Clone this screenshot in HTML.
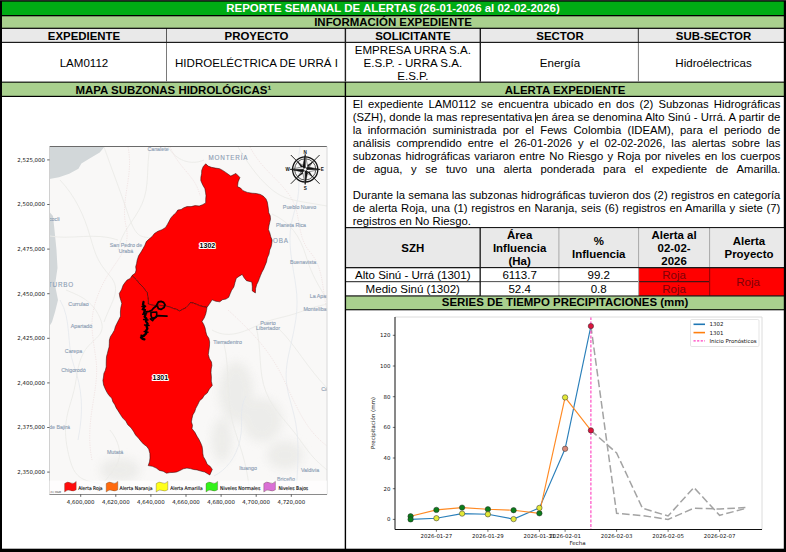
<!DOCTYPE html>
<html><head><meta charset="utf-8">
<style>
html,body{margin:0;padding:0;}
body{width:786px;height:552px;position:relative;overflow:hidden;background:#fff;font-family:"Liberation Sans",Arial,sans-serif;color:#000;}
.a{position:absolute;box-sizing:border-box;}
.c{display:flex;align-items:center;justify-content:center;text-align:center;padding-top:1.6px;}
.h{font-weight:bold;font-size:11.45px;line-height:13px;white-space:nowrap;}
.t{font-size:11.55px;line-height:13px;}
.pl{display:block;text-align:justify;text-align-last:justify;white-space:nowrap;height:13px;}
.pl.e{text-align-last:left;}
svg text{font-family:"DejaVu Sans","Liberation Sans",sans-serif;}
svg .ls text{font-family:"Liberation Sans","DejaVu Sans",sans-serif;}
</style></head><body>
<svg class="a" style="left:0;top:0" width="786" height="552" viewBox="0 0 786 552" shape-rendering="auto">
<rect width="786" height="552" fill="#000"/>
<rect x="0" y="0" width="786" height="0.6" fill="#444"/>
<rect x="2.00" y="1.60" width="781.80" height="13.40" fill="#00ac14"/>
<rect x="2.00" y="16.30" width="781.80" height="11.40" fill="#a9d08e"/>
<rect x="2.00" y="28.90" width="781.80" height="14.10" fill="#1c1c1c"/>
<rect x="2.00" y="28.90" width="164.00" height="12.90" fill="#e9e9e9"/>
<rect x="167.00" y="28.90" width="177.70" height="12.90" fill="#e9e9e9"/>
<rect x="346.10" y="28.90" width="133.50" height="12.90" fill="#e9e9e9"/>
<rect x="481.00" y="28.90" width="156.90" height="12.90" fill="#e9e9e9"/>
<rect x="638.90" y="28.90" width="144.90" height="12.90" fill="#e9e9e9"/>
<rect x="166.00" y="28.90" width="1.00" height="12.90" fill="#5a5a5a"/>
<rect x="637.90" y="28.90" width="1.00" height="12.90" fill="#5a5a5a"/>
<rect x="2.00" y="43.00" width="781.80" height="38.60" fill="#fff"/>
<rect x="166.00" y="43.00" width="1.00" height="38.60" fill="#7a7a7a"/>
<rect x="637.90" y="43.00" width="1.00" height="38.60" fill="#7a7a7a"/>
<rect x="344.70" y="43.00" width="1.40" height="38.60" fill="#222"/>
<rect x="479.60" y="43.00" width="1.40" height="38.60" fill="#222"/>
<rect x="2.00" y="82.70" width="342.70" height="13.10" fill="#a9d08e"/>
<rect x="346.10" y="82.70" width="437.70" height="13.10" fill="#a9d08e"/>
<rect x="2.00" y="97.00" width="342.70" height="451.70" fill="#fff"/>
<rect x="346.10" y="97.00" width="437.70" height="130.10" fill="#fff"/>
<rect x="346.10" y="227.10" width="437.70" height="69.40" fill="#1a1a1a"/>
<rect x="346.10" y="228.20" width="133.40" height="38.80" fill="#e9e9e9"/>
<rect x="480.90" y="228.20" width="302.90" height="38.80" fill="#a8a8a8"/>
<rect x="480.90" y="228.20" width="77.50" height="38.80" fill="#e9e9e9"/>
<rect x="559.40" y="228.20" width="78.70" height="38.80" fill="#e9e9e9"/>
<rect x="639.10" y="228.20" width="70.00" height="38.80" fill="#e9e9e9"/>
<rect x="710.10" y="228.20" width="73.70" height="38.80" fill="#e9e9e9"/>
<rect x="346.10" y="268.30" width="133.40" height="12.90" fill="#fff"/>
<rect x="480.90" y="268.30" width="157.20" height="12.90" fill="#b4b4b4"/>
<rect x="480.90" y="268.30" width="77.50" height="12.90" fill="#fff"/>
<rect x="559.40" y="268.30" width="78.70" height="12.90" fill="#fff"/>
<rect x="638.10" y="268.30" width="71.00" height="12.90" fill="#ff0000"/>
<rect x="346.10" y="282.20" width="133.40" height="13.10" fill="#fff"/>
<rect x="480.90" y="282.20" width="157.20" height="13.10" fill="#b4b4b4"/>
<rect x="480.90" y="282.20" width="77.50" height="13.10" fill="#fff"/>
<rect x="559.40" y="282.20" width="78.70" height="13.10" fill="#fff"/>
<rect x="638.10" y="282.20" width="71.00" height="13.10" fill="#ff0000"/>
<rect x="638.10" y="268.30" width="1.00" height="27.00" fill="#b4b4b4"/>
<rect x="709.10" y="268.30" width="1.00" height="27.00" fill="#b00000"/>
<rect x="710.10" y="268.30" width="73.70" height="27.00" fill="#ff0000"/>
<rect x="346.10" y="296.50" width="437.70" height="12.70" fill="#a9d08e"/>
<rect x="346.10" y="310.30" width="437.70" height="238.40" fill="#fff"/>
</svg>
<div class="a c h" style="left:2.0px;top:1.6px;width:782.0px;height:13.4px;color:#fff;padding-top:0">REPORTE SEMANAL DE ALERTAS (26-01-2026 al 02-02-2026)</div>
<div class="a c h" style="left:2.0px;top:16.3px;width:782.0px;height:11.4px;">INFORMACIÓN EXPEDIENTE</div>
<div class="a c h" style="left:2.0px;top:28.9px;width:164.0px;height:12.9px;">EXPEDIENTE</div>
<div class="a c h" style="left:167.5px;top:28.9px;width:178.0px;height:12.9px;">PROYECTO</div>
<div class="a c h" style="left:346.1px;top:28.9px;width:133.5px;height:12.9px;">SOLICITANTE</div>
<div class="a c h" style="left:481.5px;top:28.9px;width:157.0px;height:12.9px;">SECTOR</div>
<div class="a c h" style="left:642.5px;top:28.9px;width:142.0px;height:12.9px;">SUB-SECTOR</div>
<div class="a c t" style="left:2.0px;top:43.0px;width:164.0px;height:38.6px;">LAM0112</div>
<div class="a c t" style="left:167.5px;top:43.0px;width:178.0px;height:38.6px;">HIDROELÉCTRICA DE URRÁ I</div>
<div class="a c t" style="left:346.1px;top:43.0px;width:133.5px;height:38.6px;">EMPRESA URRA S.A.<br>E.S.P. - URRA S.A.<br>E.S.P.</div>
<div class="a c t" style="left:481.5px;top:43.0px;width:157.0px;height:38.6px;">Energía</div>
<div class="a c t" style="left:642.5px;top:43.0px;width:142.0px;height:38.6px;">Hidroélectricas</div>
<div class="a c h" style="left:2.0px;top:82.7px;width:342.7px;height:13.1px;">MAPA SUBZONAS HIDROLÓGICAS¹</div>
<div class="a c h" style="left:346.1px;top:82.7px;width:437.9px;height:13.1px;">ALERTA EXPEDIENTE</div>
<div class="a t" id="para" style="left:352.8px;top:98px;width:427.6px;font-size:11.3px">
<span class="pl">El expediente LAM0112 se encuentra ubicado en dos (2) Subzonas Hidrográficas</span>
<span class="pl">(SZH), donde la mas representativa en área se denomina Alto Sinú - Urrá. A partir de</span>
<span class="pl">la información suministrada por el Fews Colombia (IDEAM), para el periodo de</span>
<span class="pl">análisis comprendido entre el 26-01-2026 y el 02-02-2026, las alertas sobre las</span>
<span class="pl">subzonas hidrográficas variaron entre No Riesgo y Roja por niveles en los cuerpos</span>
<span class="pl">de agua, y se tuvo una alerta ponderada para el expediente de Amarilla.</span>
<span class="pl">&nbsp;</span>
<span class="pl">Durante la semana las subzonas hidrográficas tuvieron dos (2) registros en categoría</span>
<span class="pl">de alerta Roja, una (1) registros en Naranja, seis (6) registros en Amarilla y siete (7)</span>
<span class="pl e">registros en No Riesgo.</span>
</div>
<div class="a" style="left:535.4px;top:113px;width:1px;height:9.5px;background:#222"></div>
<div class="a c h" style="left:346.1px;top:228.2px;width:133.4px;height:38.8px;white-space:normal">SZH</div>
<div class="a c h" style="left:480.9px;top:228.2px;width:77.5px;height:38.8px;white-space:normal">Área<br>Influencia<br>(Ha)</div>
<div class="a c h" style="left:559.4px;top:228.2px;width:78.7px;height:38.8px;white-space:normal">%<br>Influencia</div>
<div class="a c h" style="left:639.1px;top:228.2px;width:70.0px;height:38.8px;white-space:normal">Alerta al<br>02-02-<br>2026</div>
<div class="a c h" style="left:713.5px;top:228.2px;width:71.0px;height:38.8px;white-space:normal">Alerta<br>Proyecto</div>
<div class="a c t" style="left:346.1px;top:268.3px;width:133.4px;height:12.9px;">Alto Sinú - Urrá (1301)</div>
<div class="a c t" style="left:480.9px;top:268.3px;width:77.5px;height:12.9px;">6113.7</div>
<div class="a c t" style="left:559.4px;top:268.3px;width:78.7px;height:12.9px;">99.2</div>
<div class="a c t" style="left:639.1px;top:268.3px;width:70.0px;height:12.9px;color:#800008">Roja</div>
<div class="a c t" style="left:346.1px;top:282.2px;width:133.4px;height:13.1px;">Medio Sinú (1302)</div>
<div class="a c t" style="left:480.9px;top:282.2px;width:77.5px;height:13.1px;">52.4</div>
<div class="a c t" style="left:559.4px;top:282.2px;width:78.7px;height:13.1px;">0.8</div>
<div class="a c t" style="left:639.1px;top:282.2px;width:70.0px;height:13.1px;color:#800008">Roja</div>
<div class="a c t" style="left:712.1px;top:268.3px;width:71.9px;height:27.0px;color:#800008">Roja</div>
<div class="a c h" style="left:346.1px;top:296.5px;width:437.9px;height:12.7px;padding-top:0">SERIES DE TIEMPO PRECIPITACIONES (mm)</div>
<svg class="a" style="left:2px;top:97px" width="344" height="452" viewBox="2 97 344 452">
<defs><filter id="bl" x="-30%" y="-30%" width="160%" height="160%"><feGaussianBlur stdDeviation="5"/></filter><clipPath id="mc"><rect x="49.5" y="146.5" width="277.5" height="348.0"/></clipPath></defs>
<rect x="49.5" y="146.5" width="277.5" height="348.0" fill="#f9f8f7"/>
<g clip-path="url(#mc)">
<path d="M49.5,146.5 L104.8,146.5 L99.7,152.4 L89.6,158.5 L81.4,163.6 L78.4,168.7 L69.2,173.8 L59,177.2 L49.5,178.9 Z" fill="#d2d7d9"/>
<path d="M49.5,212 L53,216 L54.5,230 L56.5,250 L57.5,268 L55,285 L58,300 L55,312 L52,322 L49.5,326 Z" fill="#d2d7d9"/>
<g fill="#e9e9e6" opacity="0.8" filter="url(#bl)"><ellipse cx="236" cy="392" rx="17" ry="30"/><ellipse cx="262" cy="420" rx="20" ry="22"/><ellipse cx="222" cy="440" rx="10" ry="22"/><ellipse cx="285" cy="455" rx="18" ry="14"/><ellipse cx="120" cy="470" rx="20" ry="12"/></g>
<g fill="none" stroke="#ebebe8" stroke-width="0.9"><path d="M104,147 C112,170 120,190 128,214 S140,236 150,238"/><path d="M60,180 C75,196 84,215 90,236 S98,262 110,276 S112,300 104,322"/><path d="M50,236 C70,240 96,232 118,240"/><path d="M66,290 C80,296 92,300 100,318 S92,338 84,352 S78,378 72,398 S62,430 70,460 S96,476 120,492"/><path d="M168,147 C176,160 190,166 204,160"/><path d="M238,147 C246,160 256,176 270,188 S292,200 327,206"/><path d="M272,214 C290,222 300,236 306,256 S318,284 327,300"/><path d="M212,330 C226,338 240,334 256,326 S284,318 300,312 S320,306 327,304"/><path d="M256,326 C262,350 258,372 266,392 S286,420 300,440 S318,462 327,470"/><path d="M224,344 C230,368 226,396 232,420 S246,456 250,494"/><path d="M110,430 C118,440 122,452 118,462 S104,480 96,494"/><path d="M150,147 C146,166 150,186 142,204 S122,230 118,250"/><path d="M280,330 C296,346 306,366 327,388"/></g>
<g fill="none" stroke="#e4e9ed" stroke-width="0.8"><path d="M300,147 C296,168 302,186 296,206 S288,236 292,262 S300,300 294,330 S282,372 290,400 S300,440 296,494"/><path d="M60,300 C72,320 66,344 74,366 S84,410 78,440"/><path d="M214,476 C226,470 236,458 240,440 S238,410 246,396"/></g>
<g fill="none" stroke="#eedddd" stroke-width="0.7" stroke-dasharray="1.2 1.2"><path d="M128,147 C134,176 120,200 126,226 S112,262 100,290 S92,330 96,360 S84,420 92,460"/><path d="M250,147 C262,170 278,178 290,196 S296,236 310,252 S322,290 327,310"/><path d="M228,310 C250,330 270,350 284,380 S306,430 327,446"/><path d="M170,147 C180,170 196,176 200,196"/></g>
<g fill="#8c9db4" stroke="#8c9db4" stroke-width="0.12" text-anchor="middle" class="ls"><text x="158.0" y="151.0" font-size="5.3" letter-spacing="0.0">Canalete</text><text x="228.4" y="160.0" font-size="6.3" letter-spacing="0.8">MONTERÍA</text><text x="299.5" y="208.5" font-size="5.3" letter-spacing="0.0">Pueblo Nuevo</text><text x="291.0" y="226.5" font-size="5.3" letter-spacing="0.0">Planeta Rica</text><text x="270.0" y="242.5" font-size="6.3" letter-spacing="0.8">CÓRDOBA</text><text x="303.0" y="264.0" font-size="5.3" letter-spacing="0.0">Buenavista</text><text x="324.0" y="297.5" font-size="5.3" letter-spacing="0.0">La Apartada</text><text x="318.0" y="310.5" font-size="5.3" letter-spacing="0.0">Montelíbano</text><text x="51.0" y="221.0" font-size="5.3" letter-spacing="0.0">Necoclí</text><text x="126.0" y="247.0" font-size="5.3" letter-spacing="0.0">San Pedro de</text><text x="126.0" y="252.6" font-size="5.3" letter-spacing="0.0">Urabá</text><text x="61.0" y="287.0" font-size="6.3" letter-spacing="0.8">TURBO</text><text x="78.5" y="306.0" font-size="5.3" letter-spacing="0.0">Currulao</text><text x="81.5" y="328.0" font-size="5.3" letter-spacing="0.0">Apartadó</text><text x="73.5" y="352.5" font-size="5.3" letter-spacing="0.0">Carepa</text><text x="73.5" y="371.5" font-size="5.3" letter-spacing="0.0">Chigorodó</text><text x="52.0" y="428.5" font-size="5.3" letter-spacing="0.0">Belén de Bajirá</text><text x="115.0" y="454.0" font-size="5.3" letter-spacing="0.0">Mutatá</text><text x="227.5" y="343.5" font-size="5.3" letter-spacing="0.0">Tierradentro</text><text x="268.0" y="324.6" font-size="5.3" letter-spacing="0.0">Puerto</text><text x="268.0" y="330.2" font-size="5.3" letter-spacing="0.0">Libertador</text><text x="331.0" y="390.5" font-size="5.3" letter-spacing="0.0">Cáceres</text><text x="248.0" y="469.5" font-size="5.3" letter-spacing="0.0">Ituango</text><text x="310.0" y="471.5" font-size="5.3" letter-spacing="0.0">Valdivia</text><text x="286.0" y="481.0" font-size="5.3" letter-spacing="0.0">Briceño</text></g>
</g>
<polygon points="205.7,163.8 208.2,166.1 211.4,167.3 215.5,168.1 219.6,168.7 222.7,170.4 225.7,172.4 230.8,176.1 235.9,173.4 239.9,177.5 238.1,181.9 237.5,186.6 240.6,188.1 243.0,190.7 247.4,192.4 252.1,193.2 256.2,193.5 260.3,194.4 263.5,196.3 266.0,198.9 267.3,202.1 267.9,205.6 268.4,209.0 268.7,212.5 270.2,215.7 270.5,219.2 269.7,222.6 268.9,226.0 268.4,229.4 269.8,232.9 270.7,236.5 272.0,240.0 271.8,243.5 271.1,246.8 269.7,250.0 269.0,254.1 267.3,257.9 266.5,262.0 265.1,265.4 263.7,268.9 261.9,272.2 260.5,275.6 259.3,278.6 258.2,281.6 256.7,284.5 255.6,288.6 255.4,292.9 252.3,290.9 252.3,286.4 251.8,282.0 246.5,280.7 244.1,277.8 242.2,274.4 239.2,276.2 236.3,278.2 235.0,282.6 233.8,287.1 231.6,290.3 230.1,293.8 228.7,297.3 225.9,299.1 222.5,299.7 219.8,301.8 215.8,301.3 212.1,299.8 209.6,303.7 207.0,307.4 203.2,306.6 199.4,305.6 196.5,304.3 193.6,303.2 190.5,302.5 188.4,305.3 185.9,307.8 182.7,309.3 179.6,311.0 176.6,309.4 173.3,308.5 169.3,306.8 165.0,305.9 162.0,305.7 159.0,305.2 156.0,305.5 153.0,305.3 148.2,304.0 148.3,300.2 147.7,296.4 147.3,292.6 145.1,290.1 143.3,287.3 140.9,285.0 138.6,282.7 136.7,280.1 134.3,277.8 132.0,275.6 135.3,273.1 136.1,270.0 135.7,266.7 136.6,263.6 137.1,260.4 138.6,255.8 141.2,251.8 143.1,248.5 144.9,245.2 146.3,241.6 149.1,239.0 152.1,236.6 154.4,233.5 158.0,231.2 162.0,229.7 165.6,227.4 167.4,224.4 169.1,221.3 170.7,218.2 173.0,215.4 175.8,213.0 177.8,210.0 181.1,209.5 183.9,207.7 187.0,206.6 191.1,206.6 195.1,205.6 199.2,206.0 202.6,204.7 205.7,202.9 205.7,199.3 206.0,195.8 205.5,192.2 204.9,188.7 202.6,184.7 200.8,180.5 200.9,177.1 201.6,173.8 201.7,170.4 203.1,166.8" fill="#ff0000" stroke="#1a0000" stroke-width="0.5" stroke-linejoin="round"/>
<polygon points="132.0,275.6 134.3,277.8 136.7,280.1 138.6,282.7 140.9,285.0 143.3,287.3 145.1,290.1 147.3,292.6 147.7,296.4 148.3,300.2 148.2,304.0 153.0,305.3 156.0,305.5 159.0,305.2 162.0,305.7 165.0,305.9 169.3,306.8 173.3,308.5 176.6,309.4 179.6,311.0 182.7,309.3 185.9,307.8 188.4,305.3 190.5,302.5 193.6,303.2 196.5,304.3 199.4,305.6 203.2,306.6 207.0,307.4 206.5,310.6 205.8,313.8 204.3,317.8 202.0,321.4 203.8,324.6 205.1,328.0 205.8,331.6 206.7,335.1 208.8,338.2 209.6,341.8 209.5,346.1 208.9,350.3 208.3,354.5 209.4,358.5 211.5,362.0 211.9,365.6 211.2,369.1 211.0,372.7 211.4,376.9 211.3,381.2 212.3,385.4 209.4,389.0 207.2,393.1 204.3,395.3 202.4,398.4 199.6,400.7 197.8,404.6 195.8,408.3 194.7,411.8 192.8,414.9 192.0,418.5 191.4,421.9 192.5,425.3 192.0,428.7 194.9,432.3 197.0,436.3 199.0,439.5 200.7,442.9 202.1,446.5 202.6,449.9 202.8,453.3 203.4,456.7 205.6,460.4 207.2,464.3 210.2,466.4 212.3,469.4 209.8,475.0 204.7,472.0 200.8,471.1 197.0,469.9 193.6,469.5 190.3,468.6 186.9,468.1 183.3,468.8 180.0,470.5 176.7,472.0 173.3,472.4 169.9,472.6 166.5,473.2 163.2,471.3 159.4,470.4 156.3,468.1 152.4,466.3 148.2,465.6 149.5,461.9 150.0,458.0 149.9,453.5 148.7,449.1 146.5,446.2 143.5,444.1 141.1,441.4 138.4,438.1 135.5,434.9 133.4,431.2 131.0,427.7 127.8,424.8 125.8,421.1 122.8,418.1 120.4,414.5 118.2,410.9 116.2,407.9 114.8,404.7 112.8,401.7 111.8,398.2 109.1,395.6 107.1,392.6 105.4,389.3 103.6,385.0 102.9,380.4 103.5,377.0 103.9,373.4 105.4,370.2 106.2,366.8 106.2,363.4 106.3,360.0 106.5,356.6 107.4,353.4 108.2,350.1 109.1,346.9 109.3,343.5 109.4,340.0 110.4,336.7 112.5,333.5 114.4,330.2 115.4,326.5 117.1,323.1 118.8,319.7 120.5,316.3 120.4,312.0 120.8,307.8 121.8,303.6 120.8,300.3 119.8,296.9 119.3,293.4 121.6,289.5 123.1,285.3 125.0,282.6 127.1,280.0 130.2,278.5" fill="#ff0000" stroke="#1a0000" stroke-width="0.5" stroke-linejoin="round"/>
<g fill="none" stroke="#050000" stroke-width="2.3" stroke-linejoin="round" stroke-linecap="round"><path d="M143.5,302 L143,304.6 L144.6,306.4 L143.2,308.6 L144.8,310.6 L144,313 L145.6,314.6 L144.6,316.8 L146.4,318.6 L146,321.4 L147.6,323.6 L146.6,326.4 L147.4,328.6 L146,330.8 L146.2,333.4 L144.6,335 L142.6,336.6 L141,337.4 L142.6,338.8 L144.4,339.4"/><path d="M142,306.4 L145.6,306.2 M142.2,309.6 L145.4,309.8 M142.8,314.2 L146.8,313 M143.6,319.6 L148,320 M144.6,325 L149,325.4 M144.2,331.6 L148,332.2 M141,335.2 L144,336" stroke-width="1.5"/><path d="M146,311.8 L149.4,311.4 L151.8,310.2 L153.4,308.2 L156,306.2 L157.4,303.8 L158.4,302 L161,301.4 L163.6,302.4 L165,304.8 L164,307.6 L161,309.4 L158.4,308.6 L157.4,306.2" stroke-width="1.8"/><path d="M151,312.4 L156.6,312 L156.8,315 L155.8,317.4 L152,318.4 L151,315.4 Z" stroke-width="1.7"/><path d="M150.4,318.8 L152.6,320.6 L154.6,318 L158,315.6 L162,315.8 L167,316.2" stroke-width="1.7"/></g>
<g class="ls" font-size="7" font-weight="bold" text-anchor="middle" fill="#000" stroke="#fff" stroke-width="2.2" paint-order="stroke" stroke-linejoin="round"><text x="207.4" y="248.2">1302</text><text x="160.3" y="379.9">1301</text></g>
<path d="M49.5,146.5 H327.0" stroke="#6a6a6a" stroke-width="1" fill="none"/>
<path d="M327.0,146.5 V494.5" stroke="#d8d8d8" stroke-width="1" fill="none"/>
<path d="M49.5,146.5 V494.5" stroke="#d0d0d0" stroke-width="1" fill="none"/>
<rect x="49.5" y="480.6" width="277.5" height="13.9" fill="#fff" opacity="0.72"/>
<path d="M64.6,483.6 q2.8,-2.6 5.8,-0.8 t5.8,-1.4 v8.4 q-3,2 -5.8,0.6 t-5.8,1.6 z" fill="#ff0d0d" stroke="#5a4a3a" stroke-width="0.35"/>
<text x="78.3" y="490" font-size="5" fill="#000" stroke="#000" stroke-width="0.12" textLength="24.3" lengthAdjust="spacingAndGlyphs">Alerta Roja</text>
<path d="M106.2,483.6 q2.8,-2.6 5.8,-0.8 t5.8,-1.4 v8.4 q-3,2 -5.8,0.6 t-5.8,1.6 z" fill="#ff6a0d" stroke="#5a4a3a" stroke-width="0.35"/>
<text x="119.6" y="490" font-size="5" fill="#000" stroke="#000" stroke-width="0.12" textLength="33.0" lengthAdjust="spacingAndGlyphs">Alerta Naranja</text>
<path d="M156.2,483.6 q2.8,-2.6 5.8,-0.8 t5.8,-1.4 v8.4 q-3,2 -5.8,0.6 t-5.8,1.6 z" fill="#ffff1a" stroke="#5a4a3a" stroke-width="0.35"/>
<text x="170.2" y="490" font-size="5" fill="#000" stroke="#000" stroke-width="0.12" textLength="32.4" lengthAdjust="spacingAndGlyphs">Alerta Amarilla</text>
<path d="M206.0,483.6 q2.8,-2.6 5.8,-0.8 t5.8,-1.4 v8.4 q-3,2 -5.8,0.6 t-5.8,1.6 z" fill="#33f21a" stroke="#5a4a3a" stroke-width="0.35"/>
<text x="220.0" y="490" font-size="5" fill="#000" stroke="#000" stroke-width="0.12" textLength="40.4" lengthAdjust="spacingAndGlyphs">Niveles Normales</text>
<path d="M263.8,483.6 q2.8,-2.6 5.8,-0.8 t5.8,-1.4 v8.4 q-3,2 -5.8,0.6 t-5.8,1.6 z" fill="#da70d6" stroke="#5a4a3a" stroke-width="0.35"/>
<text x="278.4" y="490" font-size="5" fill="#000" stroke="#000" stroke-width="0.12" textLength="29.8" lengthAdjust="spacingAndGlyphs">Niveles Bajos</text>
<text x="50.3" y="492.6" font-size="2.6" fill="#333">(C) OSM</text>
<path d="M49.5,494.5 H327.0" stroke="#8a8a8a" stroke-width="1" fill="none"/>
<g font-size="5.45" fill="#111" text-anchor="end">
<text x="45" y="161.8">2,525,000</text>
<text x="45" y="206.4">2,500,000</text>
<text x="45" y="251.0">2,475,000</text>
<text x="45" y="295.6">2,450,000</text>
<text x="45" y="340.2">2,425,000</text>
<text x="45" y="384.8">2,400,000</text>
<text x="45" y="429.4">2,375,000</text>
<text x="45" y="474.0">2,350,000</text>
</g>
<path d="M47.2,159.9 H49.5 M47.2,204.5 H49.5 M47.2,249.1 H49.5 M47.2,293.7 H49.5 M47.2,338.3 H49.5 M47.2,382.9 H49.5 M47.2,427.5 H49.5 M47.2,472.1 H49.5" stroke="#222" stroke-width="0.7" fill="none"/>
<g font-size="5.45" fill="#111" text-anchor="middle">
<text x="80.7" y="503.6">4,600,000</text>
<text x="115.8" y="503.6">4,620,000</text>
<text x="150.9" y="503.6">4,640,000</text>
<text x="186.0" y="503.6">4,660,000</text>
<text x="221.1" y="503.6">4,680,000</text>
<text x="256.2" y="503.6">4,700,000</text>
<text x="291.3" y="503.6">4,720,000</text>
</g>
<path d="M80.7,494.5 V496.8 M115.8,494.5 V496.8 M150.9,494.5 V496.8 M186.0,494.5 V496.8 M221.1,494.5 V496.8 M256.2,494.5 V496.8 M291.3,494.5 V496.8" stroke="#222" stroke-width="0.7" fill="none"/>
<g transform="translate(305.2,169.4)">
<path d="M-14.4,-14.4 L14.4,14.4 M-14.4,14.4 L14.4,-14.4" stroke="#111" stroke-width="0.9" fill="none"/>
<circle r="12.6" fill="none" stroke="#111" stroke-width="1.3"/><circle r="10.6" fill="none" stroke="#111" stroke-width="0.7"/>
<g stroke="#111" stroke-width="0.45" stroke-linejoin="round">
<g transform="rotate(45)"><polygon points="0,-10 1.8,-2.4 0,0" fill="#fff"/><polygon points="0,-10 -1.8,-2.4 0,0" fill="#111"/></g>
<g transform="rotate(135)"><polygon points="0,-10 1.8,-2.4 0,0" fill="#fff"/><polygon points="0,-10 -1.8,-2.4 0,0" fill="#111"/></g>
<g transform="rotate(225)"><polygon points="0,-10 1.8,-2.4 0,0" fill="#fff"/><polygon points="0,-10 -1.8,-2.4 0,0" fill="#111"/></g>
<g transform="rotate(315)"><polygon points="0,-10 1.8,-2.4 0,0" fill="#fff"/><polygon points="0,-10 -1.8,-2.4 0,0" fill="#111"/></g>
<g transform="rotate(0)"><polygon points="0,-15 2.5,-2.8 0,0" fill="#fff"/><polygon points="0,-15 -2.5,-2.8 0,0" fill="#111"/></g>
<g transform="rotate(90)"><polygon points="0,-15 2.5,-2.8 0,0" fill="#fff"/><polygon points="0,-15 -2.5,-2.8 0,0" fill="#111"/></g>
<g transform="rotate(180)"><polygon points="0,-15 2.5,-2.8 0,0" fill="#fff"/><polygon points="0,-15 -2.5,-2.8 0,0" fill="#111"/></g>
<g transform="rotate(270)"><polygon points="0,-15 2.5,-2.8 0,0" fill="#fff"/><polygon points="0,-15 -2.5,-2.8 0,0" fill="#111"/></g>
</g>
<circle r="1.6" fill="#fff" stroke="#111" stroke-width="0.5"/>
<g font-size="4.6" font-weight="bold" fill="#111" text-anchor="middle" class="ls"><text x="0" y="-15.6">N</text><text x="0" y="20.2">S</text><text x="-17.6" y="1.8">W</text><text x="17.2" y="1.8">E</text></g>
</g>
</svg>
<svg class="a" style="left:347px;top:309px" width="437" height="240" viewBox="347 309 437 240">
<polyline points="590.9,326.1 616.6,513.3 642.4,515.6 668.1,519.4 693.9,508.2 719.6,509.0 745.4,507.6" fill="none" stroke="#a3a3a3" stroke-width="1.5" stroke-dasharray="7.6 3.2"/>
<polyline points="590.9,430.4 616.6,453.0 642.4,508.2 668.1,516.0 693.9,487.5 719.6,515.3 745.4,508.5" fill="none" stroke="#a3a3a3" stroke-width="1.5" stroke-dasharray="7.6 3.2"/>
<polyline points="410.6,519.4 436.4,518.2 462.1,513.6 487.9,514.3 513.6,519.1 539.4,507.9 565.1,448.8 590.9,326.1" fill="none" stroke="#2a7fba" stroke-width="1.15"/>
<polyline points="410.6,516.3 436.4,509.9 462.1,507.6 487.9,509.3 513.6,510.2 539.4,513.3 565.1,397.4 590.9,430.4" fill="none" stroke="#ff8a24" stroke-width="1.15"/>
<path d="M590.9,317.0 V529.5" stroke="#ff3fbf" stroke-width="1.1" stroke-dasharray="3 1.6" fill="none"/>
<g stroke="#2b2b2b" stroke-width="0.5">
<circle cx="410.6" cy="516.3" r="2.7" fill="#0a7d1a"/>
<circle cx="436.4" cy="509.9" r="2.7" fill="#0a7d1a"/>
<circle cx="462.1" cy="507.6" r="2.7" fill="#0a7d1a"/>
<circle cx="487.9" cy="509.3" r="2.7" fill="#0a7d1a"/>
<circle cx="513.6" cy="510.2" r="2.7" fill="#0a7d1a"/>
<circle cx="539.4" cy="513.3" r="2.7" fill="#0a7d1a"/>
<circle cx="565.1" cy="397.4" r="2.7" fill="#e3e838"/>
<circle cx="590.9" cy="430.4" r="2.7" fill="#dc143c"/>
<circle cx="410.6" cy="519.4" r="2.7" fill="#0a7d1a"/>
<circle cx="436.4" cy="518.2" r="2.7" fill="#e3e838"/>
<circle cx="462.1" cy="513.6" r="2.7" fill="#e3e838"/>
<circle cx="487.9" cy="514.3" r="2.7" fill="#e3e838"/>
<circle cx="513.6" cy="519.1" r="2.7" fill="#e3e838"/>
<circle cx="539.4" cy="507.9" r="2.7" fill="#e3e838"/>
<circle cx="565.1" cy="448.8" r="2.7" fill="#d98a7a"/>
<circle cx="590.9" cy="326.1" r="2.7" fill="#dc143c"/>
</g>
<path d="M395.0,317.0 H762.0 V529.5" stroke="#dcdcdc" stroke-width="1" fill="none"/>
<path d="M395.0,317.0 V529.5 H762.0" stroke="#111" stroke-width="1" fill="none"/>
<g font-size="5.45" fill="#111" text-anchor="end">
<text x="390.5" y="521.3">0</text>
<text x="390.5" y="490.6">20</text>
<text x="390.5" y="459.9">40</text>
<text x="390.5" y="429.3">60</text>
<text x="390.5" y="398.6">80</text>
<text x="390.5" y="367.9">100</text>
<text x="390.5" y="337.2">120</text>
</g>
<path d="M392.8,519.4 H395 M392.8,488.7 H395 M392.8,458.0 H395 M392.8,427.4 H395 M392.8,396.7 H395 M392.8,366.0 H395 M392.8,335.3 H395" stroke="#111" stroke-width="0.6" fill="none"/>
<g font-size="5.45" fill="#111" text-anchor="middle">
<text x="436.4" y="537.8">2026-01-27</text>
<text x="487.9" y="537.8">2026-01-29</text>
<text x="539.4" y="537.8">2026-01-31</text>
<text x="565.1" y="537.8">2026-02-01</text>
<text x="616.6" y="537.8">2026-02-03</text>
<text x="668.1" y="537.8">2026-02-05</text>
<text x="719.6" y="537.8">2026-02-07</text>
<text x="577.5" y="545.4" font-size="5.5">Fecha</text>
<text transform="translate(375.3,423) rotate(-90)" font-size="5.5">Precipitación (mm)</text>
</g>
<path d="M436.4,529.5 V531.8 M487.9,529.5 V531.8 M539.4,529.5 V531.8 M565.1,529.5 V531.8 M616.6,529.5 V531.8 M668.1,529.5 V531.8 M719.6,529.5 V531.8" stroke="#111" stroke-width="0.6" fill="none"/>
<rect x="690.5" y="319.5" width="68.5" height="27" rx="1.3" fill="#fff" stroke="#dadada" stroke-width="0.7"/>
<path d="M693.5,324.3 H705" stroke="#1f77b4" stroke-width="1.6"/><path d="M693.5,332.6 H705" stroke="#ff7f0e" stroke-width="1.6"/><path d="M693.5,340.9 H705" stroke="#ff3fbf" stroke-width="1.1" stroke-dasharray="2.2 1.4"/>
<g font-size="5.45" fill="#111"><text x="709.5" y="326.2">1302</text><text x="709.5" y="334.5">1301</text><text x="709.5" y="342.8">Inicio Pronósticos</text></g>
</svg>
</body></html>
